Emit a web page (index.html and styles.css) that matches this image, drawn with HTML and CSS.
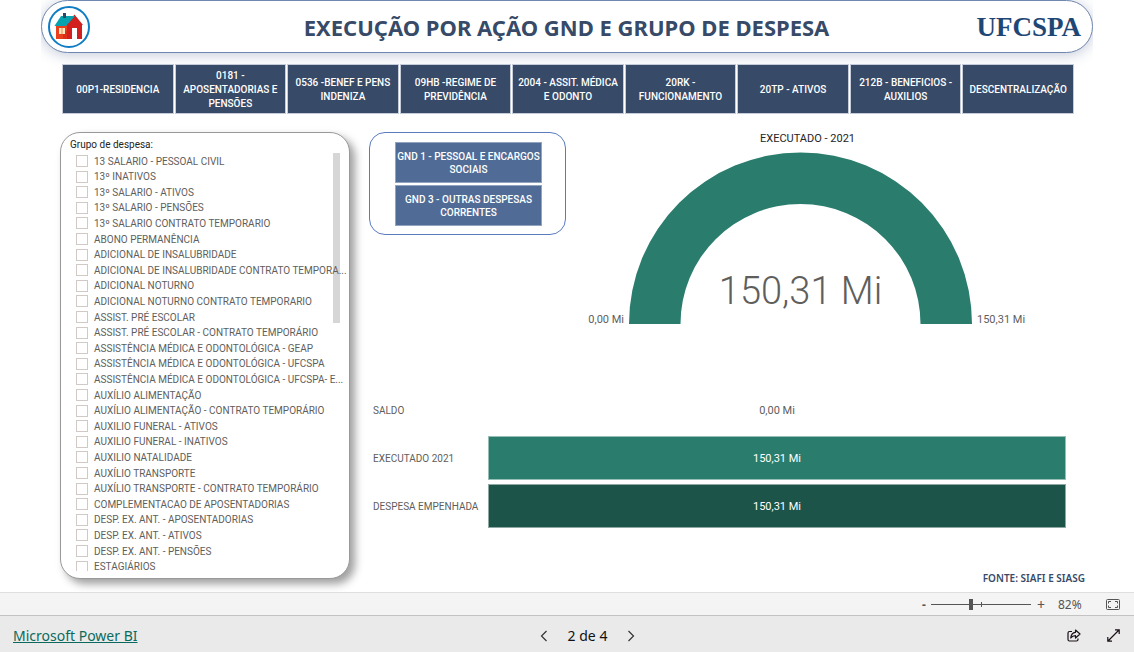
FILE: index.html
```html
<!DOCTYPE html>
<html lang="pt-BR">
<head>
<meta charset="utf-8">
<meta name="viewport" content="width=device-width, initial-scale=1">
<title>Execução por ação GND e grupo de despesa</title>
<link rel="stylesheet" href="styles.css">
</head>
<body>
<div class="report">
  <header class="banner">
    <button class="home" type="button" aria-label="Início">
      <svg viewBox="0 0 42 42" aria-hidden="true">
        <circle cx="21" cy="21" r="20" fill="#fff" stroke="#0f7cc4" stroke-width="2"/>
        <path d="M8 19h19v14H8z" fill="#e8401c"/>
        <path d="M15 27l12-7v13H15z" fill="#dc2f18"/>
        <path d="M26.500 8.500L35 19h-1v14H19V18z" fill="#d1201d"/>
        <path d="M13 10h14L18 20H6.500z" fill="#05a3b0"/>
        <path d="M15 7h3v5h-3z" fill="#2b4965"/>
        <path d="M24 22h5v11h-5z" fill="#fff"/>
        <path d="M11 22h6v6h-6z" fill="#fde6c0"/>
        <path d="M14 22v6" stroke="#e98a4a" stroke-width="1"/>
      </svg>
    </button>
    <h1 class="title">EXECUÇÃO POR AÇÃO GND E GRUPO DE DESPESA</h1>
    <span class="brand">UFCSPA</span>
  </header>

  <nav class="actions" aria-label="Ações">
    <button type="button">00P1-RESIDENCIA</button>
    <button type="button">0181 - APOSENTADORIAS E PENSÕES</button>
    <button type="button">0536 -BENEF E PENS INDENIZA</button>
    <button type="button">09HB -REGIME DE PREVIDÊNCIA</button>
    <button type="button">2004 - ASSIT. MÉDICA E ODONTO</button>
    <button type="button">20RK - FUNCIONAMENTO</button>
    <button type="button">20TP - ATIVOS</button>
    <button type="button">212B - BENEFICIOS - AUXILIOS</button>
    <button type="button">DESCENTRALIZAÇÃO</button>
  </nav>

  <main class="content">
    <section class="filter">
      <h2 class="filter-title">Grupo de despesa:</h2>
      <div class="filter-body">
        <div class="scroll-thumb"></div>
        <ul class="options">
          <li><label><input type="checkbox"><span>13 SALARIO - PESSOAL CIVIL</span></label></li>
          <li><label><input type="checkbox"><span>13º INATIVOS</span></label></li>
          <li><label><input type="checkbox"><span>13º SALARIO - ATIVOS</span></label></li>
          <li><label><input type="checkbox"><span>13º SALARIO - PENSÕES</span></label></li>
          <li><label><input type="checkbox"><span>13º SALARIO CONTRATO TEMPORARIO</span></label></li>
          <li><label><input type="checkbox"><span>ABONO PERMANÊNCIA</span></label></li>
          <li><label><input type="checkbox"><span>ADICIONAL DE INSALUBRIDADE</span></label></li>
          <li><label><input type="checkbox"><span>ADICIONAL DE INSALUBRIDADE CONTRATO TEMPORA...</span></label></li>
          <li><label><input type="checkbox"><span>ADICIONAL NOTURNO</span></label></li>
          <li><label><input type="checkbox"><span>ADICIONAL NOTURNO CONTRATO TEMPORARIO</span></label></li>
          <li><label><input type="checkbox"><span>ASSIST. PRÉ ESCOLAR</span></label></li>
          <li><label><input type="checkbox"><span>ASSIST. PRÉ ESCOLAR - CONTRATO TEMPORÁRIO</span></label></li>
          <li><label><input type="checkbox"><span>ASSISTÊNCIA MÉDICA E ODONTOLÓGICA - GEAP</span></label></li>
          <li><label><input type="checkbox"><span>ASSISTÊNCIA MÉDICA E ODONTOLÓGICA - UFCSPA</span></label></li>
          <li><label><input type="checkbox"><span>ASSISTÊNCIA MÉDICA E ODONTOLÓGICA - UFCSPA- E...</span></label></li>
          <li><label><input type="checkbox"><span>AUXÍLIO ALIMENTAÇÃO</span></label></li>
          <li><label><input type="checkbox"><span>AUXÍLIO ALIMENTAÇÃO - CONTRATO TEMPORÁRIO</span></label></li>
          <li><label><input type="checkbox"><span>AUXILIO FUNERAL - ATIVOS</span></label></li>
          <li><label><input type="checkbox"><span>AUXILIO FUNERAL - INATIVOS</span></label></li>
          <li><label><input type="checkbox"><span>AUXILIO NATALIDADE</span></label></li>
          <li><label><input type="checkbox"><span>AUXÍLIO TRANSPORTE</span></label></li>
          <li><label><input type="checkbox"><span>AUXÍLIO TRANSPORTE - CONTRATO TEMPORÁRIO</span></label></li>
          <li><label><input type="checkbox"><span>COMPLEMENTACAO DE APOSENTADORIAS</span></label></li>
          <li><label><input type="checkbox"><span>DESP. EX. ANT. - APOSENTADORIAS</span></label></li>
          <li><label><input type="checkbox"><span>DESP. EX. ANT. - ATIVOS</span></label></li>
          <li><label><input type="checkbox"><span>DESP. EX. ANT. - PENSÕES</span></label></li>
          <li><label><input type="checkbox"><span>ESTAGIÁRIOS</span></label></li>
        </ul>
      </div>
    </section>

    <div class="visuals">
      <div class="top-row">
        <section class="gnd" aria-label="GND">
          <button type="button">GND 1 - PESSOAL E ENCARGOS SOCIAIS</button>
          <button type="button">GND 3 - OUTRAS DESPESAS CORRENTES</button>
        </section>
        <section class="gauge">
          <h2 class="gauge-title">EXECUTADO - 2021</h2>
          <div class="gauge-row">
            <span class="gauge-min">0,00 Mi</span>
            <div class="gauge-dial">
              <svg viewBox="0 0 343 172" aria-hidden="true">
                <path d="M0 172A171.500 171.500 0 0 1 343 172H291.500A120 120 0 0 0 51.500 172Z" fill="#2a7d6d"/>
              </svg>
              <strong class="gauge-value">150,31 Mi</strong>
            </div>
            <span class="gauge-max">150,31 Mi</span>
          </div>
        </section>
      </div>

      <section class="bars" aria-label="Valores">
        <div class="bar-row"><span class="bar-label">SALDO</span><div class="bar bar-empty">0,00 Mi</div></div>
        <div class="bar-row"><span class="bar-label">EXECUTADO 2021</span><div class="bar bar-executed">150,31 Mi</div></div>
        <div class="bar-row"><span class="bar-label">DESPESA EMPENHADA</span><div class="bar bar-committed">150,31 Mi</div></div>
      </section>
      <p class="source">FONTE: SIAFI E SIASG</p>
    </div>
  </main>
</div>

<div class="zoombar">
  <button type="button" class="zoom-out" aria-label="Reduzir">-</button>
  <input class="zoom-range" type="range" min="0" max="100" value="40" aria-label="Zoom">
  <button type="button" class="zoom-in" aria-label="Ampliar">+</button>
  <span class="zoom-value">82%</span>
  <button type="button" class="fit" aria-label="Ajustar à página">
    <svg width="14" height="11" viewBox="0 0 14 11" fill="none" stroke="#555" aria-hidden="true">
      <rect x=".5" y=".5" width="13" height="10" rx="1"/>
      <path d="M5 2.500H2.500V4.500M2.500 6.500V8.500H5M9 2.500H11.500V4.500M11.500 6.500V8.500H9"/>
    </svg>
  </button>
</div>

<footer class="footer">
  <a class="product" href="#">Microsoft Power BI</a>
  <div class="pager">
    <button type="button" aria-label="Página anterior"><svg width="8" height="12" viewBox="0 0 8 12" fill="none" stroke="#333" stroke-width="1.200" aria-hidden="true"><path d="M6.500 1L1.500 6l5 5"/></svg></button>
    <span>2 de 4</span>
    <button type="button" aria-label="Próxima página"><svg width="8" height="12" viewBox="0 0 8 12" fill="none" stroke="#333" stroke-width="1.200" aria-hidden="true"><path d="M1.500 1l5 5-5 5"/></svg></button>
  </div>
  <div class="tools">
    <button type="button" aria-label="Compartilhar">
      <svg width="14" height="13" viewBox="0 0 14 13" fill="none" stroke="#1a1018" stroke-width="1.200" stroke-linejoin="round" aria-hidden="true">
        <path d="M5 2.500H2.500a1.500 1.500 0 0 0-1.500 1.500v6.500A1.500 1.500 0 0 0 2.500 12h7a1.500 1.500 0 0 0 1.500-1.500V9.500"/>
        <path d="M8.500 1l4.500 4-4.500 4V6.700C6 6.700 4.800 7.500 3.800 9 4 5.500 5.500 3.500 8.500 3.300z"/>
      </svg>
    </button>
    <button type="button" aria-label="Tela inteira">
      <svg width="13" height="13" viewBox="0 0 13 13" fill="none" stroke="#1a1018" stroke-width="1.200" aria-hidden="true">
        <path d="M8 .8h4.200V5M12 1L1 12M.8 8v4.200H5"/>
      </svg>
    </button>
  </div>
</footer>
</body>
</html>
```
FILE: styles.css
```css
* { box-sizing: border-box; }

body {
  margin: 0;
  min-height: 100vh;
  display: flex;
  flex-direction: column;
  background: #fff;
  color: #605e5c;
  font-family: Roboto, "Liberation Sans", sans-serif;
  font-size: 10px;
}

button {
  padding: 0;
  border: 0;
  background: none;
  color: inherit;
  font: inherit;
  cursor: pointer;
}

h1, h2, p, ul { margin: 0; padding: 0; }
svg { display: block; }

.report {
  flex: 1;
  display: flex;
  flex-direction: column;
  margin: 0 41px;
  overflow: hidden;
}

/* Banner */
.banner {
  display: grid;
  grid-template-columns: 124px 1fr 120px;
  align-items: center;
  height: 53px;
  padding: 0 11px 0 6px;
  border: 1px solid #6f86ae;
  border-radius: 27px;
  background: #fff;
  box-shadow: 0 2px 14px rgba(60, 80, 130, .3);
}
.home { width: 42px; height: 42px; }
.title {
  color: #374a67;
  font: 700 22px/30px "Noto Sans", "Open Sans", sans-serif;
  text-align: center;
  white-space: nowrap;
}
.brand {
  justify-self: end;
  color: #1f4775;
  font: 700 27px/32px "Liberation Serif", serif;
}

/* Action slicer */
.actions {
  display: grid;
  grid-template-columns: repeat(9, 1fr);
  gap: 1px;
  margin: 11px 19px 0 21px;
}
.actions button {
  height: 50px;
  padding: 2px 3px 0;
  border: 1px solid #c5cbd8;
  background: #374a67;
  color: #fff;
  font-weight: 500;
  line-height: 14px;
}

.content {
  flex: 1;
  display: flex;
  gap: 19px;
  padding: 18px 8px 7px 19px;
}

/* Filter panel */
.filter {
  flex: none;
  width: 290px;
  height: 447px;
  padding: 6px 2px 6px 9px;
  border: 1px solid #999;
  border-radius: 20px;
  background: #fff;
  box-shadow: 5px 5px 9px rgba(0, 0, 0, .38);
}
.filter-title {
  color: #252423;
  font-size: 10px;
  font-weight: 400;
  line-height: 12px;
}
.filter-body {
  position: relative;
  height: 420px;
  padding: 2px 0 0 6px;
  overflow: hidden;
}
.options { position: relative; list-style: none; }
.options li { height: 16px; }
.options li:nth-child(5n+2), .options li:nth-child(5n+4) { height: 15px; }
.options label { display: flex; align-items: center; gap: 6px; height: 100%; white-space: nowrap; }
.options input {
  appearance: none;
  flex: none;
  width: 12px;
  height: 12px;
  margin: 0;
  border: 1px solid #d0c9c6;
}
.options input:checked { background: #605e5c; }
.scroll-thumb {
  position: absolute;
  top: 2px;
  right: 7px;
  width: 7px;
  height: 170px;
  background: #d6d6d6;
}

/* Visuals */
.visuals { flex: 1; min-width: 0; display: flex; flex-direction: column; }
.top-row { display: flex; align-items: flex-start; }
.gnd {
  flex: none;
  display: flex;
  flex-direction: column;
  gap: 2px;
  width: 197px;
  padding: 9px 23px 8px 25px;
  border: 1px solid #5b7bbf;
  border-radius: 16px;
}
.gnd button {
  height: 41px;
  border: 1px solid #93a4c0;
  background: #506c96;
  color: #fff;
  font-weight: 500;
  line-height: 13px;
}

.gauge { flex: 1; padding-right: 50px; }
.gauge-title {
  padding-left: 14px;
  color: #252423;
  font-size: 11px;
  font-weight: 400;
  line-height: 14px;
  text-align: center;
}
.gauge-row {
  display: grid;
  grid-template-columns: 1fr 343px 1fr;
  align-items: end;
  gap: 5px;
  margin-top: 6px;
  color: #605e5c;
  font-size: 11px;
  line-height: 8px;
}
.gauge-min { text-align: right; white-space: nowrap; }
.gauge-max { white-space: nowrap; }
.gauge-dial { position: relative; }
.gauge-value {
  position: absolute;
  inset: auto 0 9px 0;
  color: #605e5c;
  font-size: 38px;
  font-weight: 300;
  line-height: 48px;
  text-align: center;
}

.bars {
  display: grid;
  gap: 4px;
  margin: 64px 19px 0 4px;
}
.bar-row { display: grid; grid-template-columns: 115px 1fr; align-items: center; }
.bar {
  display: flex;
  align-items: center;
  justify-content: center;
  height: 44px;
  font-size: 11px;
}
.bar-executed { border: 1px solid #94beb6; background: #2a7d6d; color: #fff; }
.bar-committed { border: 1px solid #8ea9a4; background: #1d544a; color: #fff; }
.source {
  margin-top: auto;
  color: #374a67;
  font: 600 10px/14px "Noto Sans", sans-serif;
  text-align: right;
}

/* Zoom bar */
.zoombar {
  display: flex;
  align-items: center;
  justify-content: flex-end;
  height: 23px;
  padding: 1px 14px 0 0;
  border-top: 1px solid #dedede;
  background: #f4f4f4;
  color: #555;
  font: 12px/16px "Noto Sans", sans-serif;
}
.zoom-out { width: 14px; font-weight: 700; }
.zoom-in { width: 20px; font-size: 14px; }
.zoom-range {
  appearance: none;
  width: 100px;
  height: 12px;
  margin: 0;
  background:
    linear-gradient(#555, #555) 50% 50% / 1px 5px no-repeat,
    linear-gradient(#555, #555) 50% 50% / 100% 1px no-repeat;
}
.zoom-range::-webkit-slider-thumb {
  appearance: none;
  width: 4px;
  height: 11px;
  background: #555;
}
.zoom-value { width: 55px; padding-left: 7px; }

/* Footer */
.footer {
  display: grid;
  grid-template-columns: 1fr auto 1fr;
  align-items: center;
  height: 37px;
  padding: 3px 14px 0 13px;
  border-top: 1px solid #c3c3c3;
  background: #eaeaea;
  color: #111;
  font: 14px/20px "Noto Sans", sans-serif;
}
.product { color: #0b6a5d; }
.pager { display: flex; align-items: center; gap: 20px; padding-left: 42px; }
.tools { display: flex; align-items: center; justify-content: flex-end; gap: 26px; }
```
